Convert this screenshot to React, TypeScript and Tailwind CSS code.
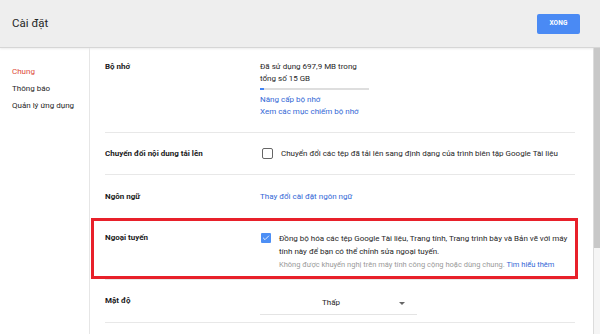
import { Check } from "lucide-react";

function Label({ text }: { text: string }) {
  return (
    <div className="w-[155px] shrink-0 text-[8px] font-bold leading-[12px] text-[#1a1a1a]">
      {text}
    </div>
  );
}

function Box({ checked }: { checked?: boolean }) {
  return checked ? (
    <span className="flex h-[10px] w-[10px] shrink-0 items-center justify-center rounded-[1px] bg-[#4d8ff5]">
      <Check size={8} strokeWidth={2.5} className="text-white" />
    </span>
  ) : (
    <span className="h-[11px] w-[11px] shrink-0 rounded-[2px] border-[1.5px] border-[#666]" />
  );
}

export default function App() {
  return (
    <div
      className="flex h-[334px] w-[600px] flex-col overflow-hidden bg-white"
      style={{ fontFamily: "Roboto, 'Noto Sans', Arial, sans-serif" }}
    >
      {/* header */}
      <div className="flex h-[48px] shrink-0 items-center justify-between border-b border-[#d6d6d6] bg-[#eeeeee] pl-[12px] pr-[20px] shadow-[0_1px_2px_rgba(0,0,0,0.08)]">
        <h1 className="text-[11.5px] leading-none text-[#262626]">Cài đặt</h1>
        <button className="h-[20px] w-[43px] rounded-[2px] bg-[#4a8af4] text-[6.5px] font-bold tracking-wide text-white">
          XONG
        </button>
      </div>

      <div className="flex min-h-0 flex-1">
        {/* sidebar */}
        <div className="w-[90px] shrink-0 border-r border-[#e6e6e6] pl-[12px] pt-[15px] text-[8px] leading-[17px] text-[#262626]">
          <div className="text-[#dd4b39]">Chung</div>
          <div>Thông báo</div>
          <div>Quản lý ứng dụng</div>
        </div>

        {/* main */}
        <div className="w-[486px] shrink-0 pl-[15px]">
          <div className="w-[470px]">
            {/* storage */}
            <div className="flex h-[85px] border-b border-[#e8e8e8] pt-[13px]">
              <Label text="Bộ nhớ" />
              <div className="text-[8px] leading-[12px] text-[#262626]">
                <div>Đã sử dụng 697,9 MB trong</div>
                <div>tổng số 15 GB</div>
                <div className="mt-[3px] flex h-[2px] w-[109px] bg-[#dedede]">
                  <div className="h-full w-[4px] bg-[#4285f4]" />
                </div>
                <div className="mt-[4px] text-[#3367d6]">Nâng cấp bộ nhớ</div>
                <div className="text-[#3367d6]">Xem các mục chiếm bộ nhớ</div>
              </div>
            </div>

            {/* convert */}
            <div className="flex h-[42px] items-center border-b border-[#e8e8e8]">
              <Label text="Chuyển đổi nội dung tải lên" />
              <div className="flex items-center gap-[8px] pl-[2px] text-[8px] text-[#262626]">
                <Box />
                <span className="whitespace-nowrap">Chuyển đổi các tệp đã tải lên sang định dạng của trình biên tập Google Tài liệu</span>
              </div>
            </div>

            {/* language */}
            <div className="flex h-[43px] items-center">
              <Label text="Ngôn ngữ" />
              <span className="text-[8px] text-[#3367d6]">Thay đổi cài đặt ngôn ngữ</span>
            </div>

            {/* offline, highlighted */}
            <div className="-ml-[14px] -mr-[3px] flex h-[61px] border-[3px] border-[#e8202a] pl-[11px] pt-[11px]">
              <Label text="Ngoại tuyến" />
              <div className="flex gap-[8px] pl-[1px]">
                <div className="pt-[1px]">
                  <Box checked />
                </div>
                <div className="whitespace-nowrap text-[8px] leading-[13px] text-[#262626]">
                  <div>Đồng bộ hóa các tệp Google Tài liệu, Trang tính, Trang trình bày và Bản vẽ với máy</div>
                  <div>tính này để bạn có thể chỉnh sửa ngoại tuyến.</div>
                  <div className="text-[7.5px] text-[#9a9a9a]">
                    Không được khuyến nghị trên máy tính công cộng hoặc dùng chung.{" "}
                    <span className="text-[#3367d6]">Tìm hiểu thêm</span>
                  </div>
                </div>
              </div>
            </div>

            {/* density */}
            <div className="flex h-[44px] items-center border-b border-t border-[#e8e8e8]">
              <Label text="Mật độ" />
              <div className="mt-[9px] flex h-[18px] w-[157px] items-start border-b border-[#e4e4e4] pl-[1px]">
                <span className="flex-1 pl-[2px] text-center text-[8px] leading-[12px] text-[#262626]">Thấp</span>
                <span className="mr-[12px] mt-[5px] h-0 w-0 border-x-[3px] border-t-[3px] border-x-transparent border-t-[#666]" />
              </div>
            </div>
          </div>
        </div>

        {/* scrollbar */}
        <div className="ml-auto w-[7px] shrink-0 border-l border-[#dcdcdc] bg-[#f5f5f5]">
          <div className="h-[200px] bg-[#c8c8c8]" />
        </div>
      </div>
    </div>
  );
}
